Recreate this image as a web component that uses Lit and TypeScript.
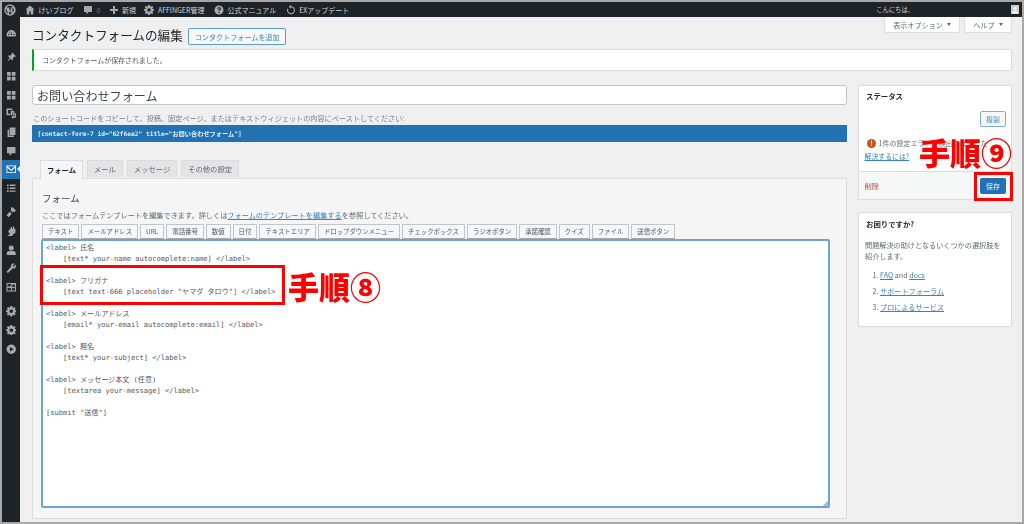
import { LitElement, html, css, svg } from "lit";
import { customElement } from "lit/decorators.js";

const ic: Record<string, any> = {
  dash: svg`<path d="M1 13a9 9 0 0 1 18 0c0 1.300-.3 2.300-.8 3.300H1.800C1.300 15.300 1 14.300 1 13zm9-6.500-1.300 7h2.600zM3.800 11.500h2.200v1.700H3.800zm10.200 0h2.200v1.700H14zM6 7.500l1.500-1 1 1.500-1.500 1z" fill-rule="evenodd"/>`,
  pin: svg`<path d="M12 1l7 7-1.500 1.200-1.200-.6-3.300 3.300c.6 1.800.3 3.300-.6 4.400l-3.300-3.300L2 18.500l5-7.500-3.300-3.300c1.100-.9 2.700-1.200 4.400-.6L11.400 3.800l-.6-1.200z"/>`,
  grid: svg`<path d="M2 2h7v7H2zm9 0h7v7h-7zM2 11h7v7H2zm9 0h7v7h-7z"/>`,
  media: svg`<path d="M1 1h11v3H4v7h4v3H1zM9 5h5l2 2v2h-4v5H9zM13 10h6v6.800a2 2 0 1 1-1.700-1.900V12.500h-2.600v5.300a2 2 0 1 1-1.700-1.900z"/>`,
  pages: svg`<path d="M7 1h11v14H7zM3 5h3v11h9v3H3z"/>`,
  comment: svg`<path d="M2 2h16v12h-6.500L7 19v-5H2z"/>`,
  mail: svg`<path d="M1 3h18v14H1zm2 1.500 7 6.500 7-6.500zM2.500 7v8.500h15V7L10 13.500z" fill-rule="evenodd"/>`,
  list: svg`<path d="M2 3h3v3H2zm5 0h11v2.500H7zM2 8.500h3v3H2zm5 .3h11v2.500H7zM2 14h3v3H2zm5 .3h11v2.500H7z"/>`,
  hammer: svg`<path d="M9 1h4.500L19 6.500l-3 3-1.500-1-2 2-3.500-3.500 1-1zM7 9l4 4-6 6.500L1 15.500z"/>`,
  plugin: svg`<path d="M13 1h2.500v4.500l2.500-.1v5.600c0 2.500-2 4-4 4.200L12 19H2l5-3.500v-2.500l-3.500-1.200L7.500 5H9V2h2.500v3H13z"/>`,
  user: svg`<circle cx="10" cy="5.800" r="4.800"/><path d="M1.500 19v-3.500c0-2.500 2.300-4 4.500-4h8c2.200 0 4.500 1.500 4.500 4V19z"/>`,
  wrench: svg`<path d="M18.500 3 14.500 7l-2-1.500L16.500 1.500C14 .5 11 1.300 10 3.500c-.7 1.300-.6 2.600-.2 3.800L1.800 15.500a2 2 0 0 0 2.800 2.800l8-8c1.300.4 2.600.5 4-.2 2.200-1.200 3-4 1.900-7.100z"/>`,
  tool: svg`<path d="M1 2h18v16H1zm8.500 2H3v5.500h1.500V7h1.500v2.500h1.500V7h2zM11 5v4h6V5zm-8 6.500V16h6v-4.500zm8 4.500h6v-6l-2.500 2.500L12.500 11 11 12.500z" fill-rule="evenodd"/>`,
  gear: svg`<path d="M8 0h4l.5 2.800 1.700.7L16.500 1.800 19 4.500l-1.700 2.300.7 1.700L20.800 9v3.500L18 13l-.7 1.700 1.700 2.300-2.500 2.700-2.300-1.700-1.700.7L12 21.500H8l-.5-2.800-1.700-.7-2.300 1.700L1 17l1.700-2.300-.7-1.700L-.8 12.500V9L2 8.500l.7-1.700L1 4.500l2.500-2.700 2.300 1.700 1.700-.7zM10 7a3.700 3.700 0 1 0 0 7.500A3.700 3.700 0 0 0 10 7z" fill-rule="evenodd" transform="scale(.93) translate(.8 0)"/>`,
  play: svg`<path d="M10 1a9 9 0 1 1 0 18 9 9 0 0 1 0-18zM7.500 5.500v9l7-4.500z" fill-rule="evenodd"/>`,
  wp: svg`<path d="M10 .5a9.500 9.500 0 1 1 0 19 9.500 9.500 0 0 1 0-19zM2.800 10c0 2.800 1.600 5.200 4 6.400L3.400 7C3 7.900 2.800 9 2.800 10zm12 -.4c0-.9-.3-1.500-.6-2-.4-.6-.7-1-.7-1.600 0-.6.500-1.200 1.200-1.200h.1A7.200 7.200 0 0 0 4 6l3.600-.2.500.1L10.200 12l1.300-3.800-.9-2.500-.9-.1 3.700 0-.9.100 2.200 6.700.6-2c.3-.8.500-.9.500-1.800zM10.100 10.700l-2 5.900a7.200 7.200 0 0 0 4.400-.1zm5.900-3.900c.1.900-.100 1.800-.4 2.800l-1.900 5.600a7.200 7.200 0 0 0 2.300-8.400z" fill-rule="evenodd"/>`,
  home: svg`<path d="M10 1 1 9h2.500v10h5v-6h3v6h5V9H19z"/>`,
  plus: svg`<path d="M8 2h4v6h6v4h-6v6H8v-6H2V8h6z"/>`,
  help: svg`<path d="M10 1a9 9 0 1 1 0 18 9 9 0 0 1 0-18zM8.800 13.500v2.300h2.400v-2.300zM10 4.500c-2.200 0-3.400 1.100-3.600 2.900H9c0-.7.400-1 1-1s1 .3 1 1c0 1.100-2.300 1.300-2.300 4.300h2.400c0-1.800 2.600-2.100 2.600-4.400 0-1.800-1.600-2.800-3.700-2.800z" fill-rule="evenodd"/>`,
  sync: svg`<path d="M10 2.500a8 8 0 1 1-7.200 4.500l2 1A5.800 5.800 0 1 0 10 4.700V7.500L5.500 3.500 10 0z"/>`,
  avatar: svg`<circle cx="10" cy="7.500" r="4.200"/><path d="M2 20c0-5 3-7 8-7s8 2 8 7z"/>`,
};
const icon = (n: string, cls = "ic") => html`<svg class=${cls} viewBox="0 0 20 20">${ic[n]}</svg>`;

const menu: [string, boolean?, boolean?][] = [
  ["dash"], ["pin", false, true], ["grid"], ["grid"], ["media"], ["pages"], ["comment"], ["mail", true], ["list"],
  ["hammer", false, true], ["plugin"], ["user"], ["wrench"], ["tool"], ["gear", false, true], ["gear"], ["play"],
];
const tags = ["テキスト","メールアドレス","URL","電話番号","数値","日付","テキストエリア","ドロップダウンメニュー","チェックボックス","ラジオボタン","承諾確認","クイズ","ファイル","送信ボタン"];
const code = `<label> 氏名
    [text* your-name autocomplete:name] </label>

<label> フリガナ
    [text text-666 placeholder "ヤマダ タロウ"] </label>

<label> メールアドレス
    [email* your-email autocomplete:email] </label>

<label> 題名
    [text* your-subject] </label>

<label> メッセージ本文 (任意)
    [textarea your-message] </label>

[submit "送信"]`;

@customElement("app-root")
export class AppRoot extends LitElement {
  static styles = css`
    :host { display: block; width: 1024px; height: 524px; overflow: hidden; position: relative;
      font-family: "Noto Sans CJK JP", "Noto Sans", sans-serif; font-size: 7px; color: #50575e; }
    * { box-sizing: border-box; }
    .frame { width: 1024px; height: 524px; border: 2px solid #a8a8a8; background: #efefef;
      display: flex; flex-direction: column; overflow: hidden; position: relative; }
    .blur { display: flex; flex-direction: column; flex: 1; min-height: 0; filter: blur(0.3px); }
    .bar { height: 15px; flex: none; background: #1d2327; color: #d3d5d6; display: flex; align-items: center; font-size: 7px; padding: 0 3px 0 1.500px; }
    .bar .ic { width: 10px; height: 10px; fill: #a7aaad; flex: none; }
    .bar .it { display: flex; align-items: center; gap: 3.500px; margin-right: 9.500px; white-space: nowrap; }
    .bar .it.c { margin-right: 9px; }
    .bar .it.p { gap: 2.500px; margin-right: 8.500px; }
    .bar .wp { width: 12px; height: 12px; margin-right: 9.500px; fill: #a7aaad; flex: none; }
    .bar .zero { color: #7e8388; font-size: 7px; }
    .bar .grow { flex: 1; }
    .bar .hello { margin-right: 97px; font-size: 6.300px; }
    .avatar { width: 8px; height: 9px; background: #c9cbcd; fill: #f2f2f2; display: block; flex: none; }
    .main { flex: 1; display: flex; min-height: 0; }
    .side { width: 18px; flex: none; background: #1d2327; display: flex; flex-direction: column; padding-top: 7px; }
    .mi { height: 18.700px; display: flex; align-items: center; justify-content: center; flex: none; position: relative; }
    .mi svg { width: 10.500px; height: 10.500px; fill: #a7aaad; }
    .mi.sep { margin-top: 5.500px; }
    .mi.on { background: #2271b1; }
    .mi.on svg { fill: #fff; }
    .mi.on::after { content: ""; position: absolute; right: 0; top: 6px; border: 3.500px solid transparent; border-right-color: #efefef; border-left-width: 0; }
    .content { flex: 1; min-width: 0; padding: 0 10px 0 12px; display: flex; flex-direction: column; position: relative; }
    .meta { position: absolute; top: 0; right: 10px; display: flex; gap: 4px; }
    .meta div { height: 16px; background: #fff; border: 1px solid #dcdcde; border-top: 0; border-radius: 0 0 3px 3px; display: flex; align-items: center; justify-content: center; gap: 4px; font-size: 7.100px; color: #646970; }
    .m1 { width: 76px; } .m2 { width: 48px; }
    .meta i { border: 2px solid transparent; border-top: 3px solid #646970; border-bottom: 0; }
    .head { display: flex; align-items: center; gap: 5.500px; height: 32px; padding-top: 7px; flex: none; }
    h1 { margin: -3px 0 0; font-size: 12.600px; font-weight: 400; color: #1d2327; line-height: 20px; white-space: nowrap; }
    .add { height: 17px; width: 98px; border: 1px solid #5d9ccb; border-radius: 2px; color: #3a83bc; background: #f6f7f7; font-size: 7.100px; display: flex; align-items: center; justify-content: center; white-space: nowrap; }
    .notice { height: 22px; background: #fff; border: 1px solid #dcdcde; border-left: 2.500px solid #00a32a; display: flex; align-items: center; padding-left: 8px; font-size: 6.950px; color: #50575e; flex: none; }
    .cols { display: flex; gap: 11px; margin-top: 14px; flex: 1; min-height: 0; }
    .left { width: 815px; flex: none; display: flex; flex-direction: column; }
    .title { height: 20px; flex: none; background: #fff; border: 1px solid #c3c4c7; border-radius: 3px; font-size: 12.100px; color: #3c434a; display: flex; align-items: center; padding-left: 4px; }
    .hint { height: 20px; flex: none; display: flex; align-items: flex-end; padding-bottom: 2px; padding-left: 1px; font-size: 7.150px; color: #7d8287; white-space: nowrap; }
    .short { height: 17px; flex: none; background: #2271b1; color: #e4eff8; font-family: "DejaVu Sans Mono", "Noto Sans CJK JP", monospace; font-size: 6.230px; font-weight: 700; display: flex; align-items: center; padding-left: 5.500px; white-space: nowrap; }
    .tabs { display: flex; gap: 4px; margin-top: 18px; padding-left: 8px; height: 18px; flex: none; position: relative; z-index: 1; }
    .tab { background: #e4e4e5; border: 1px solid #dcdcde; border-bottom: 0; font-size: 7.300px; color: #646970; display: flex; align-items: center; justify-content: center; height: 17px; padding: 0 6px; white-space: nowrap; }
    .tab.on { background: #f5f5f5; color: #1d2327; font-weight: 700; height: 18.500px; width: 43px; }
    .panel { flex: 1; background: #f5f5f5; border: 1px solid #dcdcde; margin-bottom: 3px; padding: 13px 16px 10px 8px; display: flex; flex-direction: column; min-height: 0; }
    h2 { margin: -1px 0 1px 1px; font-size: 9.500px; font-weight: 400; color: #3c434a; line-height: 14px; }
    .desc { margin: 3px 0 0 1px; font-size: 7.180px; line-height: 13px; color: #646970; white-space: nowrap; }
    a { color: #3a83bc; text-decoration: underline; }
    .tags { display: flex; gap: 2px; margin-top: 2px; height: 15px; flex: none; padding-left: 1px; white-space: nowrap; }
    .tag { border: 1px solid #c3c4c7; border-bottom-color: #a7aaad; background: #f6f7f7; border-radius: 1px; height: 14.500px; font-size: 6.400px; padding: 0 5px; display: flex; align-items: center; white-space: nowrap; color: #50575e; }
    .code { flex: 1; background: #fff; border: 2px solid #6aa5d3; border-radius: 2px; padding: 1px 3px; font-family: "DejaVu Sans Mono", "Noto Sans CJK JP", monospace; font-size: 7.070px; line-height: 11px; color: #50575e; white-space: pre; position: relative; min-height: 0; }
    .grip { position: absolute; right: 0; bottom: 0; width: 5px; height: 5px; background: linear-gradient(135deg, transparent 50%, #bbb 50%); }
    .right { flex: 1; display: flex; flex-direction: column; gap: 12px; }
    .box { background: #fff; border: 1px solid #dcdcde; }
    .status { height: 115px; display: flex; flex-direction: column; }
    .status h3, .helpb h3 { margin: 0; font-size: 7.400px; font-weight: 700; color: #1d2327; line-height: 11px; }
    .st { flex: 1; padding: 4px 5px 0 7px; display: flex; flex-direction: column; }
    .dup { align-self: flex-end; margin-top: 10px; height: 16px; width: 26px; border: 1px solid #7fadd2; border-radius: 2px; color: #4a8cbf; background: #f6f7f7; font-size: 7px; display: flex; align-items: center; justify-content: center; flex: none; }
    .err { display: flex; align-items: center; gap: 2.500px; margin-top: 11px; font-size: 7px; white-space: nowrap; color: #646970; line-height: 11px; }
    .dot { width: 9px; height: 9px; border-radius: 50%; background: #c9531c; color: #fff; font-size: 7px; font-weight: 700; display: flex; align-items: center; justify-content: center; margin-left: 1px; flex: none; line-height: 1; }
    .fix { font-size: 6.900px; line-height: 11px; margin: 2px 0 0 -1.500px; }
    .foot { height: 28px; flex: none; background: #f6f7f7; border-top: 1px solid #dcdcde; display: flex; align-items: center; justify-content: space-between; padding: 0 5px 0 5.500px; }
    .del { color: #b4484a; font-size: 7.300px; text-decoration: none; }
    .save { width: 26px; height: 16px; background: #2271b1; color: #f0f6fc; font-size: 7px; border-radius: 2px; display: flex; align-items: center; justify-content: center; margin-top: 1px; }
    .helpb { height: 115px; padding: 5px 6px 0 7px; }
    .helpb p { margin: 11px 0 0 -1px; font-size: 7.150px; line-height: 11px; color: #646970; }
    .helpb ol { margin: 8px 0 0; padding: 0 0 0 14px; font-size: 7.150px; line-height: 11px; color: #646970; }
    .helpb li { margin-bottom: 5px; }
    .rect { position: absolute; border: 3px solid #f00; }
    .r1 { left: 38px; top: 263px; width: 245px; height: 40px; }
    .r2 { left: 972px; top: 170px; width: 39px; height: 29px; }
    .big { position: absolute; color: #f00; font-weight: 900; white-space: nowrap; line-height: 1; font-size: 31px; }
    .b1 { left: 286px; top: 268px; }
    .b2 { left: 917px; top: 134px; }
  `;

  render() {
    return html`
      <div class="frame">
        <div class="blur">
        <div class="bar">
          <svg class="wp" viewBox="0 0 20 20">${ic.wp}</svg>
          <span class="it">${icon("home")}けいブログ</span>
          <span class="it c">${icon("comment")}<span class="zero">0</span></span>
          <span class="it p">${icon("plus")}新規</span>
          <span class="it">${icon("gear")}AFFINGER管理</span>
          <span class="it">${icon("help")}公式マニュアル</span>
          <span class="it">${icon("sync")}EXアップデート</span>
          <span class="grow"></span>
          <span class="hello">こんにちは、</span>
          <svg class="avatar" viewBox="0 0 20 20">${ic.avatar}</svg>
        </div>
        <div class="main">
          <nav class="side">
            ${menu.map(([n, on, sep]) => html`<div class="mi ${on ? "on" : ""} ${sep ? "sep" : ""}">${icon(n)}</div>`)}
          </nav>
          <div class="content">
            <div class="meta">
              <div class="m1">表示オプション<i></i></div>
              <div class="m2">ヘルプ<i></i></div>
            </div>
            <div class="head"><h1>コンタクトフォームの編集</h1><span class="add">コンタクトフォームを追加</span></div>
            <div class="notice">コンタクトフォームが保存されました。</div>
            <div class="cols">
              <div class="left">
                <div class="title">お問い合わせフォーム</div>
                <div class="hint">このショートコードをコピーして、投稿、固定ページ、またはテキストウィジェットの内容にペーストしてください:</div>
                <div class="short">[contact-form-7 id="62f6ea2" title="お問い合わせフォーム"]</div>
                <div class="tabs">
                  <div class="tab on">フォーム</div><div class="tab">メール</div><div class="tab">メッセージ</div><div class="tab">その他の設定</div>
                </div>
                <div class="panel">
                  <h2>フォーム</h2>
                  <div class="desc">ここではフォームテンプレートを編集できます。詳しくは<a>フォームのテンプレートを編集する</a>を参照してください。</div>
                  <div class="tags">${tags.map((t) => html`<span class="tag">${t}</span>`)}</div>
                  <div class="code">${code}<span class="grip"></span></div>
                </div>
              </div>
              <div class="right">
                <div class="box status">
                  <div class="st">
                    <h3>ステータス</h3>
                    <span class="dup">複製</span>
                    <div class="err"><span class="dot">!</span>1件の設定エラーが検出されました</div>
                    <a class="fix">解決するには?</a>
                  </div>
                  <div class="foot"><a class="del">削除</a><span class="save">保存</span></div>
                </div>
                <div class="box helpb">
                  <h3>お困りですか?</h3>
                  <p>問題解決の助けとなるいくつかの選択肢を紹介します。</p>
                  <ol>
                    <li><a>FAQ</a> and <a>docs</a></li>
                    <li><a>サポートフォーラム</a></li>
                    <li><a>プロによるサービス</a></li>
                  </ol>
                </div>
              </div>
            </div>
          </div>
        </div>
        </div>
        <div class="rect r1"></div>
        <div class="rect r2"></div>
        <div class="big b1">手順⑧</div>
        <div class="big b2">手順⑨</div>
      </div>`;
  }
}
